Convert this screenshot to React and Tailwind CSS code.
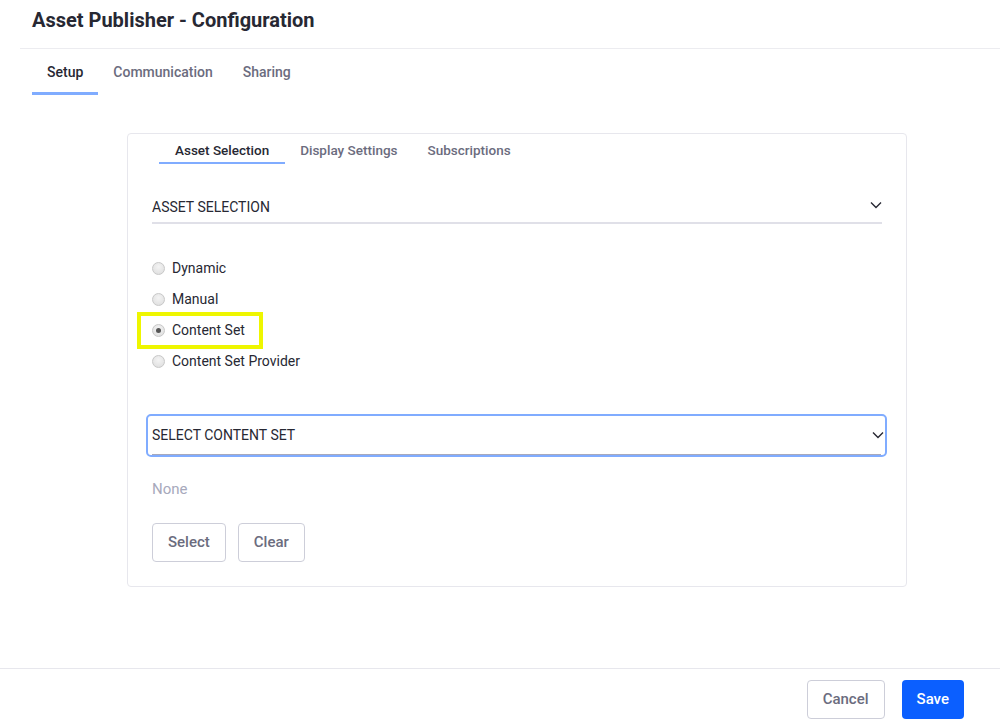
import React from "react";

const Chevron = ({ className = "" }) => (
  <svg className={className} width="14" height="14" viewBox="0 0 14 14" fill="none">
    <path d="M2 4.5 L7 9.5 L12 4.5" stroke="#272833" strokeWidth="1.4" />
  </svg>
);

const Radio = ({ checked, label }) => (
  <div className="flex items-center h-[31px]">
    <span className="w-[13px] h-[13px] rounded-full border border-[#c8c8c8] bg-[radial-gradient(circle_at_50%_35%,#f4f4f4,#dcdcdc)] flex items-center justify-center">
      {checked && <span className="w-[5px] h-[5px] rounded-full bg-[#555]" />}
    </span>
    <span className="ml-[7px] text-[14px] text-[#272833]">{label}</span>
  </div>
);

export default function App() {
  return (
    <div className="w-[1000px] h-[726px] bg-white flex flex-col font-['Roboto',sans-serif] overflow-hidden">
      <div className="h-[48px] pl-[32px] flex items-center">
        <h1 className="text-[20px] font-bold text-[#272833] -mt-[9px]">Asset Publisher - Configuration</h1>
      </div>
      <div className="ml-[20px] border-t border-[#ececf0]" />
      <div className="flex pl-[32px] h-[46px]">
        <div className="px-[15px] pt-[13px] text-[14px] font-medium text-[#272833] border-b-[3px] border-[#80acff] h-[46px]">Setup</div>
        <div className="px-[15px] pt-[13px] text-[14px] font-medium text-[#6b6c7e]">Communication</div>
        <div className="px-[15px] pt-[13px] text-[14px] font-medium text-[#6b6c7e]">Sharing</div>
      </div>
      <div className="flex-1">
        <div className="ml-[127px] mt-[38px] w-[780px] h-[454px] border border-[#e7e7ed] rounded-[4px]">
          <div className="flex pl-[31px]">
            <div className="px-[16px] pt-[6px] h-[30px] text-[13.5px] font-medium text-[#272833] border-b-[2px] border-[#80acff]">Asset Selection</div>
            <div className="px-[15px] pt-[6px] h-[30px] text-[13.5px] font-medium text-[#6b6c7e]">Display Settings</div>
            <div className="px-[15px] pt-[6px] h-[30px] text-[13.5px] font-medium text-[#6b6c7e]">Subscriptions</div>
          </div>
          <div className="px-[24px]">
            <div className="mt-[32px] flex items-center justify-between h-[28px] border-b-2 border-[#e0e0e8]">
              <span className="text-[14px] text-[#272833] -mt-[4px]">ASSET SELECTION</span>
              <Chevron className="-mt-[8px] mr-[-1px]" />
            </div>
            <div className="mt-[29px] relative">
              <Radio label="Dynamic" />
              <Radio label="Manual" />
              <div className="relative">
                <div className="absolute left-[-15px] top-[-3px] w-[126px] h-[37px] border-[4px] border-[#eef600]" />
                <div className="relative"><Radio checked label="Content Set" /></div>
              </div>
              <Radio label="Content Set Provider" />
            </div>
            <div className="mt-[37px] ml-[-6px] mr-[-5px] h-[43px] border-2 border-[#80acff] rounded-[5px] px-[4px] flex flex-col">
              <div className="flex-1 flex items-center justify-between border-b border-[#a7a9bc]">
                <span className="text-[14px] text-[#272833]">SELECT CONTENT SET</span>
                <Chevron className="mr-[-4px]" />
              </div>
            </div>
            <div className="mt-[21px] text-[15px] text-[#a7a9bc]">None</div>
            <div className="mt-[22px] flex gap-[12px]">
              <button className="h-[39px] px-[15px] border border-[#cdced9] rounded-[4px] text-[15px] font-medium text-[#6b6c7e] bg-white">Select</button>
              <button className="h-[39px] px-[15px] border border-[#cdced9] rounded-[4px] text-[15px] font-medium text-[#6b6c7e] bg-white">Clear</button>
            </div>
          </div>
        </div>
      </div>
      <div className="border-t border-[#e7e7ed] h-[58px] flex items-start justify-end pr-[36px] pt-[11px] gap-[17px]">
        <button className="h-[39px] px-[15px] border border-[#cdced9] rounded-[4px] text-[15px] font-medium text-[#6b6c7e] bg-white">Cancel</button>
        <button className="h-[39px] px-[15px] rounded-[4px] text-[15px] font-medium text-white bg-[#0b5fff]">Save</button>
      </div>
    </div>
  );
}
